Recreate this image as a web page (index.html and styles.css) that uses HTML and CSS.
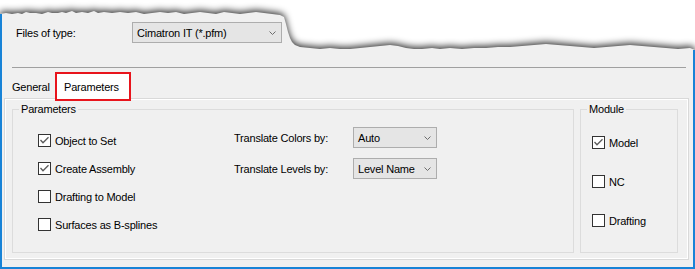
FILE: index.html
```html
<!DOCTYPE html>
<html>
<head>
<meta charset="utf-8">
<link rel="stylesheet" href="styles.css">
</head>
<body>
<div class="window">
  <div class="files-row">
    <span class="files-label">Files of type:</span>
    <div class="combo combo-files">
      <span class="combo-text">Cimatron IT (*.pfm)</span>
      <svg class="chev" width="7" height="4" viewBox="0 0 7 4"><polyline points="0.5,0.5 3.5,3.5 6.5,0.5" fill="none" stroke="#6d6d6d" stroke-width="1"/></svg>
    </div>
  </div>
  <div class="separator"></div>
  <div class="tabs">
    <div class="tab">General</div>
    <div class="tab tab-active">Parameters</div>
  </div>
  <div class="panel">
    <fieldset class="group group-params">
      <legend>Parameters</legend>
      <div class="params-body">
        <div class="check-col">
          <label class="check"><span class="box"><svg width="11" height="11" viewBox="0 0 11 11"><polyline points="1.5,5 4,7.8 9.5,2.2" fill="none" stroke="#5c5c5c" stroke-width="1.3"/></svg></span>Object to Set</label>
          <label class="check"><span class="box"><svg width="11" height="11" viewBox="0 0 11 11"><polyline points="1.5,5 4,7.8 9.5,2.2" fill="none" stroke="#5c5c5c" stroke-width="1.3"/></svg></span>Create Assembly</label>
          <label class="check"><span class="box"></span>Drafting to Model</label>
          <label class="check"><span class="box"></span>Surfaces as B-splines</label>
        </div>
        <div class="select-col">
          <span class="sel-label">Translate Colors by:</span>
          <div class="combo combo-small">
            <span class="combo-text">Auto</span>
            <svg class="chev" width="7" height="4" viewBox="0 0 7 4"><polyline points="0.5,0.5 3.5,3.5 6.5,0.5" fill="none" stroke="#6d6d6d" stroke-width="1"/></svg>
          </div>
          <span class="sel-label">Translate Levels by:</span>
          <div class="combo combo-small">
            <span class="combo-text">Level Name</span>
            <svg class="chev" width="7" height="4" viewBox="0 0 7 4"><polyline points="0.5,0.5 3.5,3.5 6.5,0.5" fill="none" stroke="#6d6d6d" stroke-width="1"/></svg>
          </div>
        </div>
      </div>
    </fieldset>
    <fieldset class="group group-module">
      <legend>Module</legend>
      <div class="module-body">
        <label class="check"><span class="box"><svg width="11" height="11" viewBox="0 0 11 11"><polyline points="1.5,5 4,7.8 9.5,2.2" fill="none" stroke="#5c5c5c" stroke-width="1.3"/></svg></span>Model</label>
        <label class="check"><span class="box"></span>NC</label>
        <label class="check"><span class="box"></span>Drafting</label>
      </div>
    </fieldset>
  </div>
</div>
</body>
</html>
```
FILE: styles.css
```css
html, body {
  margin: 0;
  padding: 0;
}
body {
  width: 695px;
  height: 269px;
  overflow: hidden;
  font-family: "Liberation Sans", Arial, sans-serif;
  font-size: 11px;
  letter-spacing: -0.2px;
  color: #000;
  background: #fff;
}
.window {
  width: 695px;
  height: 269px;
  box-sizing: border-box;
  padding: 0 6px 0 4px;
  background-image: url("data:image/svg+xml,%3Csvg xmlns='http://www.w3.org/2000/svg' width='695' height='269'%3E%3Cdefs%3E%3Cfilter id='s' x='-5%25' y='-50%25' width='110%25' height='200%25'%3E%3CfeGaussianBlur stdDeviation='3.5'/%3E%3C/filter%3E%3C/defs%3E%3Crect width='695' height='269' fill='white'/%3E%3Cpath transform='translate(0,-2)' filter='url(%23s)' fill='black' fill-opacity='0.8' d='M0 14 L6 13 L12 14 L18 13 L22 14 L26 12 L30 13 L36 13 L42 14 L48 12 L52 13 L58 13 L62 12 L66 13 L72 11 L76 13 L82 12 L88 13 L94 11 L98 13 L104 12 L112 13 L120 12 L128 13 L136 12 L144 14 L152 13 L160 12 L168 13 L176 12 L184 14 L192 13 L200 12 L208 13 L216 14 L224 12 L232 13 L240 14 L248 13 L256 12 L264 13 L272 14 L280 15 L284 17 L286 24 L288 32 L290 38 L292 42 L295 45 L300 47 L310 48 L320 49 L330 48 L340 49 L350 49 L360 48 L370 47 L380 46 L390 45 L398 46 L406 48 L414 49 L422 49 L432 48 L440 49 L450 48 L462 49 L474 48 L486 48 L498 47 L510 47 L522 46 L534 45 L546 44 L558 45 L570 46 L582 47 L594 48 L606 47 L618 46 L630 45 L642 46 L654 47 L666 48 L678 49 L690 48 L695 50 L695 269 L0 269 Z'/%3E%3Cpath fill='%23f0f0f0' d='M0 14 L6 13 L12 14 L18 13 L22 14 L26 12 L30 13 L36 13 L42 14 L48 12 L52 13 L58 13 L62 12 L66 13 L72 11 L76 13 L82 12 L88 13 L94 11 L98 13 L104 12 L112 13 L120 12 L128 13 L136 12 L144 14 L152 13 L160 12 L168 13 L176 12 L184 14 L192 13 L200 12 L208 13 L216 14 L224 12 L232 13 L240 14 L248 13 L256 12 L264 13 L272 14 L280 15 L284 17 L286 24 L288 32 L290 38 L292 42 L295 45 L300 47 L310 48 L320 49 L330 48 L340 49 L350 49 L360 48 L370 47 L380 46 L390 45 L398 46 L406 48 L414 49 L422 49 L432 48 L440 49 L450 48 L462 49 L474 48 L486 48 L498 47 L510 47 L522 46 L534 45 L546 44 L558 45 L570 46 L582 47 L594 48 L606 47 L618 46 L630 45 L642 46 L654 47 L666 48 L678 49 L690 48 L695 50 L695 269 L0 269 Z'/%3E%3Crect x='0' y='14' width='2' height='255' fill='%231883d7'/%3E%3Crect x='693' y='50' width='2' height='219' fill='%231883d7'/%3E%3Crect x='0' y='267' width='695' height='2' fill='%231883d7'/%3E%3C/svg%3E");
  background-repeat: no-repeat;
}
.files-row {
  display: flex;
  align-items: center;
  padding: 22px 0 0 12px;
  height: 21px;
}
.files-label {
  width: 116px;
}
.combo {
  display: flex;
  align-items: center;
  justify-content: space-between;
  box-sizing: border-box;
  height: 21px;
  background: #e5e5e5;
  border: 1px solid #adadad;
  padding: 0 5px 0 4px;
}
.combo-files {
  width: 150px;
}
.combo-small {
  width: 84px;
}
.separator {
  margin: 24px 3px 0 8px;
  height: 1px;
  background: #a0a0a0;
}
.tabs {
  display: flex;
  margin-top: 4px;
  height: 29px;
  position: relative;
  z-index: 1;
}
.tab {
  display: flex;
  align-items: center;
  box-sizing: border-box;
  height: 29px;
  padding-left: 7px;
}
.tab:first-child {
  margin-left: 1px;
  width: 50px;
}
.tab-active {
  width: 76px;
  border: 2px solid #e8141c;
  background: #fff;
  padding-left: 7px;
}
.panel {
  display: flex;
  gap: 6px;
  box-sizing: border-box;
  height: 162px;
  margin-top: -3px;
  padding: 4px 10px 6px 7px;
  border: 1px solid #d9d9d9;
  box-shadow: inset 0 0 0 1px #fff;
  background: #f0f0f0;
}
.group {
  margin: 0;
  padding: 0;
  border: 1px solid #dcdcdc;
  min-width: 0;
  box-sizing: border-box;
}
.group legend {
  margin-left: 6px;
  padding: 0 2px;
  line-height: 13px;
}
.group-params {
  width: 562px;
}
.group-module {
  width: 98px;
}
.params-body {
  display: flex;
  padding: 11px 0 0 25px;
}
.check-col {
  width: 196px;
  display: flex;
  flex-direction: column;
  gap: 13px;
  margin-top: 6px;
}
.check {
  display: flex;
  align-items: center;
  gap: 4px;
  height: 15px;
}
.box {
  width: 13px;
  height: 13px;
  box-sizing: border-box;
  border: 1px solid #333;
  background: #fff;
  display: flex;
  align-items: center;
  justify-content: center;
}
.select-col {
  display: grid;
  grid-template-columns: 119px 84px;
  grid-auto-rows: 21px;
  row-gap: 10px;
  align-items: center;
}
.module-body {
  display: flex;
  flex-direction: column;
  gap: 24px;
  padding: 19px 0 0 11px;
}
```
